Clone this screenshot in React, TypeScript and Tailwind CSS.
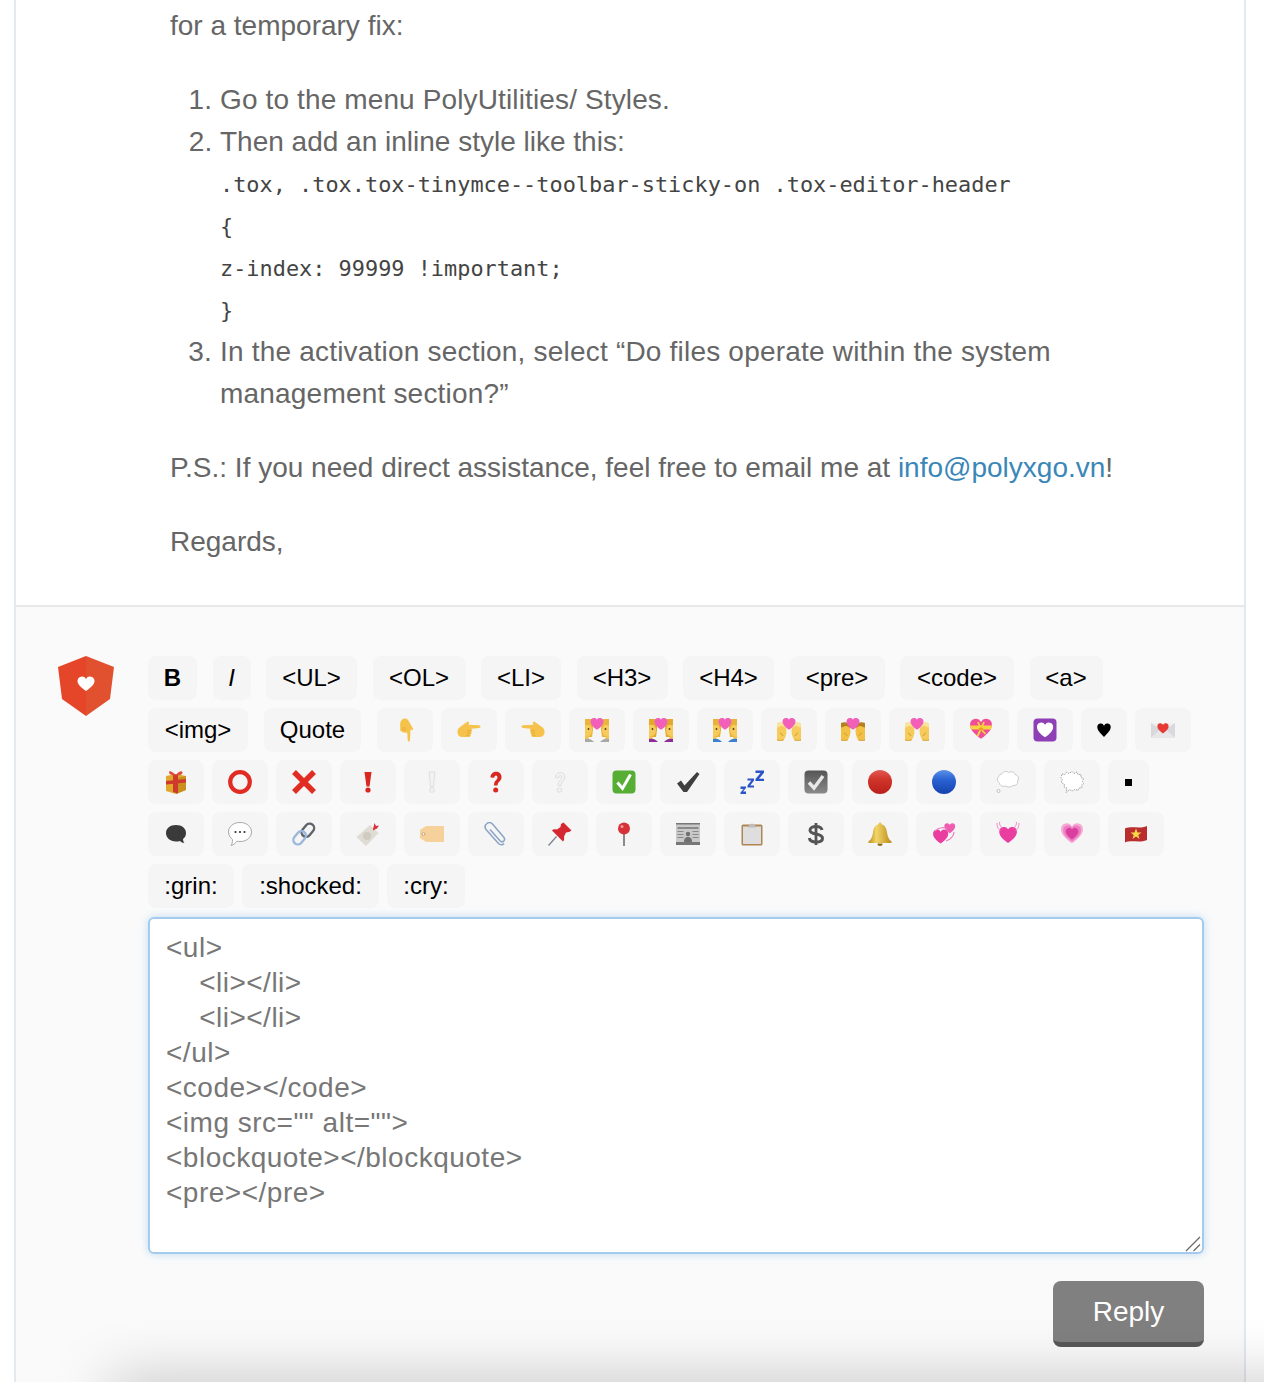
import type { ReactNode } from "react";

function Svg({ children, className = "w-6 h-6" }: { children: ReactNode; className?: string }) {
  return (
    <svg viewBox="0 0 24 24" className={className}>
      {children}
    </svg>
  );
}

const heartPath = "M12 21.500C5 16.500 1.500 12.500 1.500 8A5.600 5.600 0 0 1 12 5.200 5.600 5.600 0 0 1 22.500 8c0 4.500-3.500 8.500-10.500 13.500z";

function Heart({ x = 0, y = 0, s = 1, fill = "#ee4fa5" }: { x?: number; y?: number; s?: number; fill?: string }) {
  return <path d={heartPath} fill={fill} transform={`translate(${x} ${y}) scale(${s})`} />;
}

// two people with clothes, heart between them
function Couple({ hair, cloth }: { hair: string; cloth: string }) {
  return (
    <Svg>
      <path d="M0 1h5.500c2 1.500 2.500 4 2.500 7v4l-1 7H0z" fill={hair} />
      <path d="M24 1h-5.500c-2 1.500-2.500 4-2.500 7v4l1 7h7z" fill={hair} />
      <path d="M0 7h4.500c1.500 1 2.500 3 2.500 5 0 3-2 6-4 6H0z" fill="#f7cb5b" />
      <path d="M24 7h-4.500c-1.500 1-2.500 3-2.500 5 0 3 2 6 4 6h3z" fill="#f7cb5b" />
      <circle cx="3.500" cy="11" r=".9" fill="#5b3a17" />
      <circle cx="20.500" cy="11" r=".9" fill="#5b3a17" />
      <path d="M0 18h3l1 3-4 .5zM24 18h-3l-1 3 4 .5z" fill="#f3c34e" />
      <path d="M0 21c3-.5 6-.5 9 3H0z" fill={cloth} />
      <path d="M24 21c-3-.5-6-.5-9 3h9z" fill={cloth} />
      <Heart x={4.560} y={-1.500} s={0.62} fill="#f25fb9" />
    </Svg>
  );
}

// the kiss variants: only two heads, low in the box
function Heads({ hair, skin = "#f7cb5b" }: { hair: string; skin?: string }) {
  return (
    <Svg>
      <path d="M0 6h6c2 1 3.500 4 3.500 7 0 4-1.500 7-3 9.500H0z" fill={skin} />
      <path d="M24 6h-6c-2 1-3.500 4-3.500 7 0 4 1.500 7 3 9.500H24z" fill={skin} />
      <path d="M0 5c2-1 5-1 7 0 1.500 1 2.500 3 2.500 5.500-2-2-3.500-2.500-5-2.500S2 9.500 0 9.500zM24 5c-2-1-5-1-7 0-1.500 1-2.500 3-2.500 5.500 2-2 3.500-2.500 5-2.500s2.500 1.500 4.500 1.500z" fill={hair} />
      <path d="M0 22c2 .5 4.500.5 6.500 0M24 22c-2 .5-4.500.5-6.500 0M3 15c1.500.5 2.500 1.500 3 3M21 15c-1.500.5-2.500 1.500-3 3" stroke="#c9902a" strokeWidth=".8" fill="none" />
      <Heart x={4.560} y={-1.500} s={0.62} fill="#f25fb9" />
    </Svg>
  );
}

function PointRight({ flip = false }: { flip?: boolean }) {
  return (
    <Svg>
      <g transform={flip ? "matrix(-1 0 0 1.200 24 -3.500)" : "matrix(1 0 0 1.200 0 -3.500)"}>
        <path
          d="M0.500 14c0-2.500 2-3.500 4-4.500 2-1 4-2.500 6-3.500 1-.5 2 .5 1.500 1.500l-.5 1 10.500.5c2 .1 2 2.200 0 2.300l-7.500.5c.8 1 .5 2.200-.2 2.700.5 1 0 2-.8 2.300.2 1-.5 2-1.500 2H6c-3 0-5.500-1.300-5.500-4.300z"
          fill="#f5c24c"
        />
        <path d="M10 13.500h4M10 15.500h3.500M9.500 17.500h3" stroke="#dc9f2c" strokeWidth=".6" fill="none" />
      </g>
    </Svg>
  );
}

function PointDown() {
  return (
    <Svg>
      <g transform="translate(3.500 0)">
        <path
          d="M8.500 0.500c2.500 0 3.500 2 4.500 4 1 2 2.500 4 3.500 6 .5 1-.5 2-1.500 1.500l-1-.5-.5 10.500c-.1 2-2.200 2-2.300 0L10.700 14.500c-1 .8-2.200.5-2.700-.2-1 .5-2 0-2.300-.8-1 .2-2-.5-2-1.500V6c0-3 1.800-5.500 4.800-5.500z"
          fill="#f5c24c"
        />
        <path d="M8.500 9v4M6.500 9v3.500" stroke="#dc9f2c" strokeWidth=".6" fill="none" />
      </g>
    </Svg>
  );
}

type Emoji = { key: string; w?: string; icon: ReactNode };

const emojiRow2: Emoji[] = [
  { key: "down", icon: <PointDown /> },
  { key: "right", icon: <PointRight /> },
  { key: "left", icon: <PointRight flip /> },
  { key: "c1", icon: <Couple hair="#eab53c" cloth="#a8a8a8" /> },
  { key: "c2", icon: <Couple hair="#e3a92f" cloth="#8c2d9a" /> },
  { key: "c3", icon: <Couple hair="#e7b23a" cloth="#3a7fd0" /> },
  { key: "c4", icon: <Heads hair="#f8e39a" /> },
  { key: "c5", icon: <Heads hair="#b67f1f" skin="#f2c044" /> },
  { key: "c6", icon: <Heads hair="#f8e39a" /> },
  {
    key: "ribbon",
    icon: (
      <Svg>
        <Heart x={-0.500} y={-1.500} s={1.040} fill="#ef4f98" />
        <path d="M1 7.500h22l-1 4H2z" fill="#f7d53e" />
        <path d="M9 4l3 7-3.500 7M15 4l-3 7 4.500 5" stroke="#f7d53e" strokeWidth="1.800" fill="none" />
        <path d="M12 9l2.500 2-2.500 2-2.500-2z" fill="#e89f1d" />
      </Svg>
    ),
  },
  {
    key: "decoration",
    icon: (
      <Svg>
        <rect x="0.500" y="0.500" width="23" height="23" rx="4" fill="#8e3fb5" />
        <Heart x={2.800} y={2.800} s={0.77} fill="#fff" />
      </Svg>
    ),
  },
  {
    key: "black",
    w: "w-[46px]",
    icon: (
      <Svg className="w-[14px] h-[18px]">
        <path d="M12 24C4 16 .5 12 .5 7A6 6 0 0 1 12 4.500 6 6 0 0 1 23.500 7c0 5-3.500 9-11.500 17z" fill="#000" />
      </Svg>
    ),
  },
  {
    key: "letter",
    icon: (
      <Svg>
        <path d="M0 5h24v14.500H0z" fill="#d9d9db" />
        <path d="M0 5l12 8 12-8z" fill="#f0f0f2" />
        <path d="M0 19.500l9-7.500 3 2 3-2 9 7.500z" fill="#e8e8ea" />
        <Heart x={5.500} y={4} s={0.54} fill="#e53b34" />
      </Svg>
    ),
  },
];

const emojiRow3: Emoji[] = [
  {
    key: "gift",
    icon: (
      <Svg>
        <path d="M2 6l10-2 10 2v14l-10 4-10-3z" fill="#e0a92c" />
        <path d="M12 8l10-2v14l-10 4z" fill="#c98f1f" />
        <path d="M9 4.500h5v19l-5-1.500z" fill="#cf3a2c" />
        <path d="M2 11l20-2v3.500L2 14.500z" fill="#cf3a2c" />
        <path d="M11.500 5C8 1 5 .5 5 2.500S9 6 11.500 5zM12 5c3-4 6-4.500 6.500-2.500S15 6 12 5z" fill="#e1493b" />
      </Svg>
    ),
  },
  {
    key: "o",
    icon: (
      <Svg>
        <circle cx="12" cy="12" r="9.800" fill="none" stroke="#e02c22" strokeWidth="4.200" />
      </Svg>
    ),
  },
  {
    key: "x",
    icon: (
      <Svg>
        <path d="M2 2l20 20M22 2L2 22" stroke="#e02c22" strokeWidth="5.500" />
      </Svg>
    ),
  },
  {
    key: "ex",
    icon: (
      <Svg>
        <path d="M8.500 2h7l-2 14.500h-3z" fill="#d9261e" />
        <circle cx="12" cy="20" r="2.600" fill="#d9261e" />
      </Svg>
    ),
  },
  {
    key: "ex2",
    icon: (
      <Svg>
        <path d="M9 2h6l-1.500 14.500h-3z" fill="#f2f2f2" stroke="#d6d6d6" strokeWidth=".7" />
        <circle cx="12" cy="20" r="2.400" fill="#f2f2f2" stroke="#d6d6d6" strokeWidth=".7" />
      </Svg>
    ),
  },
  {
    key: "q",
    icon: (
      <Svg>
        <path d="M6.500 7.500C6.500 0 17.500 0 17.500 7c0 4.500-4 4.500-4 8.500H10c0-5.500 3.500-5.500 3.500-8 0-3-3.200-2.700-3.200.2z" fill="#d9261e" />
        <circle cx="11.700" cy="20" r="2.500" fill="#d9261e" />
      </Svg>
    ),
  },
  {
    key: "q2",
    icon: (
      <Svg>
        <path d="M7.500 7.500C7.500 1 17 1 17 7c0 4-4 4-4 8.500h-3c0-5 3.500-5.500 3.500-8 0-2.500-2.800-2.200-2.800.2z" fill="#f2f2f2" stroke="#d6d6d6" strokeWidth=".7" />
        <circle cx="11.500" cy="20" r="2.300" fill="#f2f2f2" stroke="#d6d6d6" strokeWidth=".7" />
      </Svg>
    ),
  },
  {
    key: "greencheck",
    icon: (
      <Svg>
        <rect x="0.500" y="0.500" width="23" height="23" rx="4" fill="#56ae35" />
        <path d="M5.500 12.500l5 6 8-14" fill="none" stroke="#fff" strokeWidth="3" />
      </Svg>
    ),
  },
  {
    key: "check",
    icon: (
      <Svg>
        <path d="M1 13.500l4-3 3.500 5L21 2l2.500 2L11 22H7.500z" fill="#3f3f3f" />
      </Svg>
    ),
  },
  {
    key: "zzz",
    icon: (
      <Svg>
        <path d="M15.500 .5h8.500v2.200l-5 6h5V11h-8.500V9l5-6h-5z" fill="#2a55c8" />
        <path d="M7.500 8.500h6.500v2l-3.800 5H14v2H7.500v-2l3.800-5H7.500z" fill="#2a55c8" />
        <path d="M.500 16.500h5.500v1.500l-3 3.500H6V24H.5v-1.500L3.500 19H.5z" fill="#2a55c8" />
      </Svg>
    ),
  },
  {
    key: "graycheck",
    icon: (
      <Svg>
        <defs>
          <linearGradient id="gc" x1="0" y1="0" x2="0" y2="1">
            <stop offset="0" stopColor="#555" />
            <stop offset="1" stopColor="#8a8a8a" />
          </linearGradient>
        </defs>
        <rect x="0.500" y="0.500" width="23" height="23" rx="4" fill="url(#gc)" />
        <path d="M5 12.500l5 5.500 9-12" fill="none" stroke="#e8e8e8" strokeWidth="3.400" />
      </Svg>
    ),
  },
  {
    key: "red",
    icon: (
      <Svg>
        <defs>
          <linearGradient id="rd" x1="0" y1="0" x2="0" y2="1">
            <stop offset="0" stopColor="#e2594f" />
            <stop offset=".4" stopColor="#d0352b" />
            <stop offset="1" stopColor="#b8201a" />
          </linearGradient>
        </defs>
        <circle cx="12" cy="12" r="12" fill="url(#rd)" />
      </Svg>
    ),
  },
  {
    key: "blue",
    icon: (
      <Svg>
        <defs>
          <linearGradient id="bl" x1="0" y1="0" x2="0" y2="1">
            <stop offset="0" stopColor="#5d92e8" />
            <stop offset=".4" stopColor="#2a62d2" />
            <stop offset="1" stopColor="#1542ae" />
          </linearGradient>
        </defs>
        <circle cx="12" cy="12" r="12" fill="url(#bl)" />
      </Svg>
    ),
  },
  {
    key: "thought",
    icon: (
      <Svg>
        <path
          d="M6 3.500c2-2.500 5-2.500 6.500-1 2.500-1.500 6-.5 6.500 2 3 .5 4.500 4 2.500 6.500 1 2.500-1.500 5-4.500 4.500-2 2-5.500 2-7.500.5-3 1-6-.5-6-3-2.500-1.500-3-5-.5-6.500 0-1.500 1-2.500 3-2.500z"
          fill="#fff"
          stroke="#c4c4c4"
          strokeWidth=".9"
        />
        <circle cx="2.500" cy="21" r="1.500" fill="#fff" stroke="#a8a8a8" strokeWidth=".7" />
      </Svg>
    ),
  },
  {
    key: "angry",
    icon: (
      <Svg>
        <path
          d="M2 4l3 .5L6.500 2 9 3.500 12 1.500l2 2 3-1.500 1 2.500 3 0v3l2.500 1-1 3 1.500 2-2.500 1.500.5 2.500-3 .5-1 2.500-3-1-3 1.500-2-1.500-4 3 1-4.500-3-1 .5-2.500L1 12l1.500-2L1 7.500z"
          fill="#fff"
          stroke="#8a8a8a"
          strokeWidth=".8"
          strokeDasharray="1.500 1"
        />
      </Svg>
    ),
  },
  {
    key: "square",
    w: "w-[41px]",
    icon: <div className="w-[7px] h-[7px] bg-black" />,
  },
];

const emojiRow4: Emoji[] = [
  {
    key: "bubble",
    icon: (
      <Svg>
        <path d="M12 3c6 0 10 3.500 10 8 0 2.500-1 4.500-3 6 0 1.500.5 3 1.500 4-2 0-3.500-1-4.500-2-1.500.5-2.500.5-4 .5-6 0-10-4-10-8.500S6 3 12 3z" fill="#3a3a3a" />
      </Svg>
    ),
  },
  {
    key: "speech",
    icon: (
      <Svg>
        <path d="M12 .5c6.500 0 11.500 4 11.500 9.500S18.500 19.500 12 19.500c-1 0-2 0-3-.3C7.500 21 5.500 23 3 23.500c1.200-1.500 1.500-3.500 1.500-6C2 15.500.5 13 .5 10 .5 4.500 5.500.5 12 .5z" fill="#fff" stroke="#a8a8a8" strokeWidth="1" />
        <circle cx="7.500" cy="10" r="1.100" fill="#333" />
        <circle cx="12" cy="10" r="1.100" fill="#333" />
        <circle cx="16.500" cy="10" r="1.100" fill="#333" />
      </Svg>
    ),
  },
  {
    key: "link",
    icon: (
      <Svg>
        <g fill="none" strokeWidth="2.400">
          <rect x="11.500" y="1" width="9" height="14.500" rx="4.500" transform="rotate(40 16 8)" stroke="#5f636b" />
          <rect x="3" y="8.500" width="9" height="14.500" rx="4.500" transform="rotate(40 7.500 16)" stroke="#9cb7dc" />
        </g>
      </Svg>
    ),
  },
  {
    key: "memo",
    icon: (
      <Svg>
        <path d="M14 3l8.500 8L10 24 .5 15z" fill="#dfdcd4" />
        <circle cx="11" cy="14" r="4" fill="#cfcbc2" />
        <path d="M17 7l1.500-6 1.500 3 3-.5-2 3-4 2z" fill="#d8323a" />
      </Svg>
    ),
  },
  {
    key: "tag",
    icon: (
      <Svg>
        <path d="M6 4h18v16H6L0 16V8z" fill="#f6d19c" />
        <circle cx="3.500" cy="12" r="1.400" fill="#fff" stroke="#b08a5a" strokeWidth=".7" />
      </Svg>
    ),
  },
  {
    key: "clip",
    icon: (
      <Svg>
        <path d="M20 21.500c-1.500 2-4 1.500-5.500 0L2 7.500C.5 5.500 1 3 3 1.500 5 0 7 .5 8.500 2L20 15.500c1 1.500.5 3-.5 3.800-1 .8-2.500.5-3.500-.5L6 7.500" fill="none" stroke="#8ba4c6" strokeWidth="1.500" />
      </Svg>
    ),
  },
  {
    key: "pushpin",
    icon: (
      <Svg>
        <path d="M.5 23.500l8-9" stroke="#7b8590" strokeWidth="1.300" />
        <path d="M15.500 .5l8 8-2.500 1.500-3 .5-2 4c.5 2.500 0 4-1 5L4 8.500c1-1 2.500-1.500 5-1l3.500-2.500.5-3z" fill="#d4272f" />
      </Svg>
    ),
  },
  {
    key: "roundpin",
    icon: (
      <Svg>
        <rect x="11" y="11" width="2" height="13" fill="#8b8b8b" />
        <circle cx="12" cy="6.500" r="6" fill="#d7323a" />
        <circle cx="10" cy="4.500" r="1.500" fill="#f09a9c" />
      </Svg>
    ),
  },
  {
    key: "news",
    icon: (
      <Svg>
        <rect x="0" y="1" width="24" height="22" fill="#c9c9c9" />
        <path d="M0 1h24v1.500H0zM0 20h24v3H0z" fill="#777" />
        <path d="M1.500 5h21v2h-21zM1.500 9h6v1h-6zM1.500 12h6v1h-6zM1.500 15h6v1h-6zM16.500 9h6v1h-6zM16.500 12h6v1h-6zM16.500 15h6v1h-6z" fill="#8a8a8a" />
        <circle cx="12" cy="12" r="2.200" fill="#707070" />
        <path d="M8 20c0-4 2-5 4-5s4 1 4 5z" fill="#707070" />
      </Svg>
    ),
  },
  {
    key: "clipboard",
    icon: (
      <Svg>
        <rect x="1.500" y="2.500" width="21" height="21" rx="1.500" fill="#b08554" />
        <rect x="3" y="4.500" width="18" height="17.500" fill="#dedede" />
        <path d="M9 3h2l1-2 1 2h2l1 2.500H8z" fill="#bdbdbd" />
      </Svg>
    ),
  },
  {
    key: "dollar",
    icon: (
      <Svg>
        <path d="M18 8c-.5-2.500-2.500-3.500-6-3.500-3.500 0-6 1.500-6 3.700 0 5.300 12.500 2.300 12.500 8 0 2.300-2.500 3.800-6.500 3.800-4 0-6.200-1.300-6.700-4" fill="none" stroke="#555" strokeWidth="3" />
        <path d="M12 1v22" stroke="#555" strokeWidth="2.800" />
      </Svg>
    ),
  },
  {
    key: "bell",
    icon: (
      <Svg>
        <defs>
          <linearGradient id="bg" x1="0" y1="0" x2="1" y2="0">
            <stop offset="0" stopColor="#b88d1c" />
            <stop offset=".35" stopColor="#f2d568" />
            <stop offset="1" stopColor="#b98b18" />
          </linearGradient>
        </defs>
        <path d="M12 .5c1 0 1.500.8 1.500 1.800 3.500 1 5 4 5.500 8 .5 4 1.500 7 4.500 9.200.5.500.3 1.500-1 1.500H1.500c-1.300 0-1.500-1-1-1.500 3-2.200 4-5.200 4.500-9.200.5-4 2-7 5.500-8C10.500 1.300 11 .5 12 .5z" fill="url(#bg)" />
        <path d="M9.500 21.500h5a2.500 2.500 0 0 1-5 0z" fill="#8f6d14" />
      </Svg>
    ),
  },
  {
    key: "revolving",
    icon: (
      <Svg>
        <Heart x={0} y={6} s={0.72} fill="#e93d9f" />
        <Heart x={11.500} y={0} s={0.52} fill="#ef5db2" />
        <path d="M3 9c4-4 10-4 12-2M22 10c0 4-4 8-8 9" fill="none" stroke="#f07cc0" strokeWidth="1.200" />
      </Svg>
    ),
  },
  {
    key: "growing",
    icon: (
      <Svg>
        <Heart x={2} y={3} s={0.84} fill="#e93d9f" />
        <path d="M1 1c0 4 1 6 3.500 7.500M3.500 0c0 3 1 5 3 6M23 1c0 4-1 6-3.500 7.500M20.500 0c0 3-1 5-3 6" fill="none" stroke="#f28cc9" strokeWidth="1" />
      </Svg>
    ),
  },
  {
    key: "beating",
    icon: (
      <Svg>
        <Heart x={-0.500} y={-1} s={1.040} fill="#f6a9d6" />
        <Heart x={2} y={1.500} s={0.84} fill="#ee7cc0" />
        <Heart x={4.800} y={4.500} s={0.6} fill="#d93f9f" />
      </Svg>
    ),
  },
  {
    key: "flag",
    icon: (
      <Svg>
        <path d="M1 6.500c7-3 14 1 22-2.500v14c-8 3.500-15-.5-22 2.500z" fill="#b92d2e" />
        <path d="M12 6.500l1.500 4h4l-3.200 2.500 1.200 4-3.500-2.400-3.500 2.400 1.200-4-3.200-2.500h4z" fill="#f7d648" />
      </Svg>
    ),
  },
];

function TextBtn({ children, className = "" }: { children: ReactNode; className?: string }) {
  return (
    <button className={`h-[44px] rounded-lg bg-[#f5f5f5] text-[24px] text-black whitespace-nowrap ${className}`}>
      {children}
    </button>
  );
}

function EmojiBtn({ icon, w = "w-[56px]" }: { icon: ReactNode; w?: string }) {
  return (
    <button className={`h-[44px] ${w} rounded-lg bg-[#f5f5f5] flex items-center justify-center`}>{icon}</button>
  );
}

export default function App() {
  return (
    <div className="relative h-[1382px] overflow-hidden bg-white font-['Liberation_Sans',sans-serif]">
      <div className="ml-[14px] mr-[18px] h-full border-x-2 border-[#e4e9ee] flex flex-col">
        {/* Post body */}
        <article className="pt-[5px] pl-[154px] pr-[40px] text-[28px] leading-[42px] text-[#666] h-[600px] shrink-0 box-content">
          <p>for a temporary fix:</p>
          <ol className="mt-8 pl-[50px] list-decimal">
            <li className="tracking-[0.13px]">Go to the menu PolyUtilities/ Styles.</li>
            <li>
              Then add an inline style like this:
              <div className="font-['DejaVu_Sans_Mono',monospace] text-[21.9px] text-[#444] pt-px -mb-px">
                <div>.tox, .tox.tox-tinymce--toolbar-sticky-on .tox-editor-header</div>
                <div>{"{"}</div>
                <div>z-index: 99999 !important;</div>
                <div>{"}"}</div>
              </div>
            </li>
            <li className="tracking-[0.2px]">
              In the activation section, select “Do files operate within the system management section?”
            </li>
          </ol>
          <p className="mt-8">
            P.S.: If you need direct assistance, feel free to email me at{" "}
            <a className="text-[#3a87b7]">info@polyxgo.vn</a>!
          </p>
          <p className="mt-8">Regards,</p>
        </article>

        {/* Reply form */}
        <section className="flex-1 border-t-2 border-[#e8e8e8] bg-[#fafafa] pt-[49px] pl-[42px] pr-[40px] flex gap-[34px]">
          <svg viewBox="0 0 56 60" className="w-[56px] h-[60px] shrink-0">
            <path d="M28 0L56 11 52 43 28 60z" fill="#e2512f" />
            <path d="M28 0L0 11 4 43 28 60z" fill="#e5462a" />
            <path d="M28 35c-6-4.500-8.500-7-8.500-10a4.500 4.500 0 0 1 8.500-2 4.500 4.500 0 0 1 8.500 2c0 3-2.500 5.500-8.500 10z" fill="#fff" />
          </svg>

          <div className="flex-1 min-w-0">
            <div className="flex flex-col gap-2">
              <div className="flex gap-[15.500px]">
                <TextBtn className="w-[49px] font-bold">B</TextBtn>
                <TextBtn className="w-[38px] italic">I</TextBtn>
                <TextBtn className="w-[91px]">{"<UL>"}</TextBtn>
                <TextBtn className="w-[93px]">{"<OL>"}</TextBtn>
                <TextBtn className="w-[80px]">{"<LI>"}</TextBtn>
                <TextBtn className="w-[91px]">{"<H3>"}</TextBtn>
                <TextBtn className="w-[91px]">{"<H4>"}</TextBtn>
                <TextBtn className="w-[95px]">{"<pre>"}</TextBtn>
                <TextBtn className="w-[114px]">{"<code>"}</TextBtn>
                <TextBtn className="w-[73px]">{"<a>"}</TextBtn>
              </div>
              <div className="flex gap-2">
                <TextBtn className="w-[100px]">{"<img>"}</TextBtn>
                <TextBtn className="w-[97px] mx-2">Quote</TextBtn>
                {emojiRow2.map((e) => (
                  <EmojiBtn key={e.key} icon={e.icon} w={e.w} />
                ))}
              </div>
              <div className="flex gap-2">
                {emojiRow3.map((e) => (
                  <EmojiBtn key={e.key} icon={e.icon} w={e.w} />
                ))}
              </div>
              <div className="flex gap-2">
                {emojiRow4.map((e) => (
                  <EmojiBtn key={e.key} icon={e.icon} />
                ))}
              </div>
              <div className="flex gap-2">
                <TextBtn className="w-[86px]">:grin:</TextBtn>
                <TextBtn className="w-[137px]">:shocked:</TextBtn>
                <TextBtn className="w-[78px]">:cry:</TextBtn>
              </div>
            </div>

            <div className="relative mt-[9px]">
              <textarea
                className="block w-full h-[337px] px-4 py-[11px] rounded-md border-2 border-[#a5cbec] bg-white text-[28px] leading-[35px] tracking-[0.5px] text-[#777] outline-none resize-none shadow-[0_0_8px_rgba(102,175,233,0.4)]"
                defaultValue={`<ul>\n    <li></li>\n    <li></li>\n</ul>\n<code></code>\n<img src="" alt="">\n<blockquote></blockquote>\n<pre></pre>`}
              />
              {/* resize grip */}
              <svg viewBox="0 0 16 16" className="absolute right-[3px] bottom-[2px] w-4 h-4">
                <path d="M1 15L15 1M8.500 15L15 8.500" stroke="#666" strokeWidth="1.200" fill="none" />
              </svg>
            </div>

            <div className="flex justify-end mt-[27px]">
              <button className="w-[151px] h-[66px] rounded-lg bg-[#808080] border-b-[5px] border-[#585858] text-[28px] text-white">
                Reply
              </button>
            </div>
          </div>
        </section>
      </div>

      {/* shadow of the bar sitting just under the fold */}
      <div className="absolute inset-x-0 bottom-0 h-[90px] overflow-hidden pointer-events-none">
        <div className="absolute left-[110px] -right-[100px] top-[90px] h-10 shadow-[0_0_60px_rgba(0,0,0,0.26)]" />
      </div>
    </div>
  );
}
